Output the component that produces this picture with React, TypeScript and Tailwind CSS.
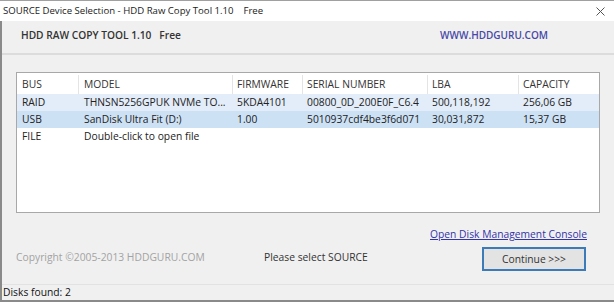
import React from "react";

const cols = [
  { w: "w-[62px]", pl: "pl-[5px]" },
  { w: "w-[154px]", pl: "pl-[5px]" },
  { w: "w-[70px]", pl: "pl-[4px]" },
  { w: "w-[125px]", pl: "pl-[4px]" },
  { w: "w-[91px]", pl: "pl-[4px]" },
  { w: "flex-1", pl: "pl-[4px]" },
];

const header = ["BUS", "MODEL", "FIRMWARE", "SERIAL NUMBER", "LBA", "CAPACITY"];
const rows: { cells: string[]; bg: string }[] = [
  { cells: ["RAID", "THNSN5256GPUK NVMe TO...", "5KDA4101", "00800_0D_200E0F_C6.4", "500,118,192", "256,06 GB"], bg: "bg-[#e2edf9]" },
  { cells: ["USB", "SanDisk Ultra Fit (D:)", "1.00", "5010937cdf4be3f6d071", "30,031,872", "15,37 GB"], bg: "bg-[#cde1f5]" },
  { cells: ["FILE", "Double-click to open file", "", "", "", ""], bg: "bg-white" },
];

export default function App() {
  return (
    <div className="w-[614px] h-[302px] bg-[#f0f0f0] flex flex-col text-[10.3px] text-[#222] font-['Open_Sans',sans-serif] overflow-hidden border-t border-[#a0a0a0]">
      {/* Title bar */}
      <div className="h-[20px] bg-white flex items-center pl-[3px] pr-[9px] shrink-0">
        <span className="text-[9.6px] text-[#222]">SOURCE Device Selection - HDD Raw Copy Tool 1.10&nbsp;&nbsp;&nbsp; Free</span>
        <svg className="ml-auto" width="9" height="9" viewBox="0 0 9 9">
          <path d="M0.5 0.5 L8.5 8.5 M8.5 0.5 L0.5 8.5" stroke="#555" strokeWidth="1" />
        </svg>
      </div>
      <div className="flex-1 flex flex-col border-l-2 border-[#8a8a8a]">
        {/* Header band */}
        <div className="h-[34px] flex items-center pl-[19px] pr-[66px] pb-[3px] border-b-2 border-[#dcdcdc] shrink-0">
          <span className="font-semibold text-[10.2px] text-[#333]">HDD RAW COPY TOOL 1.10&nbsp;&nbsp; Free</span>
          <span className="ml-auto font-semibold text-[10px] text-[#4848a8]">WWW.HDDGURU.COM</span>
        </div>
        {/* Body */}
        <div className="flex-1 flex flex-col pl-[14px] pr-[14px] pt-[17px]">
          <div className="h-[141px] bg-white border border-[#a8a8a8] flex flex-col shrink-0">
            <div className="flex h-[21px] items-center text-[#333] pt-[2px]">
              {header.map((h, i) => (
                <div key={i} className={`${cols[i].w} ${cols[i].pl} h-full flex items-center ${i < 5 ? "border-r border-[#e4e4e4]" : ""}`}>
                  {h}
                </div>
              ))}
            </div>
            {rows.map((r, ri) => (
              <div key={ri} className={`flex h-[17px] items-center pt-[1px] ${r.bg}`}>
                {r.cells.map((c, i) => (
                  <div key={i} className={`${cols[i].w} ${cols[i].pl} whitespace-nowrap overflow-hidden`}>
                    {c}
                  </div>
                ))}
              </div>
            ))}
          </div>
          <div className="flex flex-col items-end pr-[13px] mt-[14px]">
            <span className="text-[#3333aa] underline">Open Disk Management Console</span>
          </div>
          <div className="flex items-start mt-[5px] pr-[13px]">
            <span className="text-[#a3a3a3] w-[248px] pt-[3px]">Copyright ©2005-2013 HDDGURU.COM</span>
            <span className="text-[#333] pt-[3px]">Please select SOURCE</span>
            <div className="ml-auto mr-[1px] w-[104px] h-[24px] border-2 border-[#3d7ab8] bg-[#e3e3e3] flex items-center justify-center text-[#333]">
              Continue &gt;&gt;&gt;
            </div>
          </div>
        </div>
        {/* Status bar */}
        <div className="h-[18px] border-t border-[#e2e2e2] flex items-center pl-[1px] border-b-2 border-b-[#8a8a8a] text-[#111]">
          Disks found: 2
        </div>
      </div>
    </div>
  );
}
